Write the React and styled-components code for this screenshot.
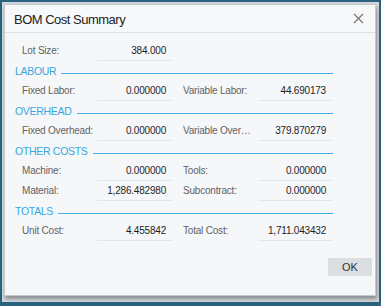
import React from "react";
import styled, { createGlobalStyle } from "styled-components";

const GlobalStyle = createGlobalStyle`
  html, body {
    margin: 0;
    padding: 0;
  }
  body {
    font-family: "Liberation Sans", Arial, sans-serif;
    background: #2a6280;
  }
`;

const Screen = styled.div`
  width: 381px;
  height: 306px;
  box-sizing: border-box;
  padding: 2px 2px 4px 2px;
  background: #2a6280;
`;

const Backdrop = styled.div`
  height: 100%;
  box-sizing: border-box;
  padding: 2px 3px 3px 2px;
  background: #d3d8dc;
`;

const Dialog = styled.div`
  height: 292px;
  display: flex;
  flex-direction: column;
  background: #f6f7f9;
  border: 1px solid #c5cbd0;
  box-sizing: border-box;
  box-shadow: 1px 3px 4px rgba(0, 0, 0, 0.35);
`;

const Header = styled.div`
  height: 27px;
  display: flex;
  align-items: center;
  justify-content: space-between;
  padding: 0 10px 0 9px;
  border-bottom: 1px solid #dde1e5;
  background: #f7f8fa;
`;

const Title = styled.div`
  font-size: 13px;
  letter-spacing: -0.5px;
  color: #222;
  padding-top: 1px;
`;

const Close = styled.button`
  border: none;
  background: none;
  padding: 0;
  width: 14px;
  height: 14px;
  display: flex;
  align-items: center;
  justify-content: center;
  cursor: pointer;
`;

const Body = styled.div`
  padding: 8px 0 0 10px;
  flex: 1;
`;

const Row = styled.div`
  display: grid;
  grid-template-columns: 75px 75px 11px 75px 74px;
  height: 20px;
  padding-left: 7px;
  & > :nth-child(3) {
    grid-column: 4;
  }
`;

const Label = styled.div`
  font-size: 10px;
  letter-spacing: -0.2px;
  color: #5f6266;
  line-height: 20px;
  white-space: nowrap;
  overflow: hidden;
  text-overflow: ellipsis;
  padding-right: 2px;
`;

const Value = styled.div`
  font-size: 10px;
  letter-spacing: -0.2px;
  color: #1e1e1e;
  line-height: 19px;
  text-align: right;
  padding-right: 6px;
  border-bottom: 1px solid #e4e7ea;
`;

const Section = styled.div`
  display: flex;
  align-items: center;
  height: 20px;
  width: 318px;
  color: #35a6de;
  font-size: 10.5px;
  letter-spacing: -0.3px;
  &::after {
    content: "";
    flex: 1;
    height: 1px;
    background: #45aee3;
    margin: 4px 0 0 5px;
  }
`;

const Footer = styled.div`
  display: flex;
  justify-content: flex-end;
  padding: 0 3px 19px 0;
`;

const OkButton = styled.button`
  width: 44px;
  height: 18px;
  border: none;
  background: #dcdfe2;
  color: #333;
  font-family: inherit;
  font-size: 11px;
  padding: 0;
`;

const Field = ({ label, value }) => (
  <>
    <Label>{label}</Label>
    <Value>{value}</Value>
  </>
);

export default function App() {
  return (
    <>
      <GlobalStyle />
      <Screen>
        <Backdrop>
          <Dialog>
            <Header>
              <Title>BOM Cost Summary</Title>
              <Close aria-label="Close">
                <svg width="11" height="11" viewBox="0 0 11 11">
                  <path d="M1 1 L10 10 M10 1 L1 10" stroke="#777" strokeWidth="1.2" fill="none" />
                </svg>
              </Close>
            </Header>
            <Body>
              <Row>
                <Field label="Lot Size:" value="384.000" />
              </Row>
              <Section>LABOUR</Section>
              <Row>
                <Field label="Fixed Labor:" value="0.000000" />
                <Field label="Variable Labor:" value="44.690173" />
              </Row>
              <Section>OVERHEAD</Section>
              <Row>
                <Field label="Fixed Overhead:" value="0.000000" />
                <Field label="Variable Overhead:" value="379.870279" />
              </Row>
              <Section>OTHER COSTS</Section>
              <Row>
                <Field label="Machine:" value="0.000000" />
                <Field label="Tools:" value="0.000000" />
              </Row>
              <Row>
                <Field label="Material:" value="1,286.482980" />
                <Field label="Subcontract:" value="0.000000" />
              </Row>
              <Section>TOTALS</Section>
              <Row>
                <Field label="Unit Cost:" value="4.455842" />
                <Field label="Total Cost:" value="1,711.043432" />
              </Row>
            </Body>
            <Footer>
              <OkButton>OK</OkButton>
            </Footer>
          </Dialog>
        </Backdrop>
      </Screen>
    </>
  );
}
